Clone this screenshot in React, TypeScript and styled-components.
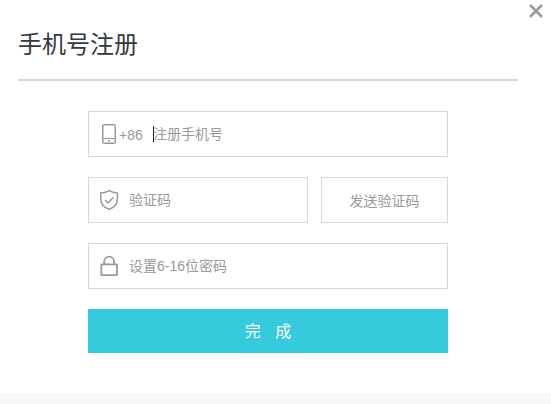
import React from "react";
import styled, { createGlobalStyle } from "styled-components";

const GlobalStyle = createGlobalStyle`
  * { box-sizing: border-box; }
  body {
    margin: 0;
    background: #f8f8f8;
    font-family: "Liberation Sans", "Noto Sans CJK SC", sans-serif;
  }
`;

const Dialog = styled.main`
  position: relative;
  height: 393px;
  background: #fff;
  padding: 0 33px 0 18px;
  overflow: hidden;
`;

const CloseButton = styled.button`
  position: absolute;
  top: 3px;
  right: 7px;
  width: 16px;
  height: 16px;
  padding: 0;
  border: 0;
  background: none;
  svg { display: block; }
`;

const Header = styled.header`
  height: 81px;
  border-bottom: 2px solid #d7d7d7;
`;

const Title = styled.h1`
  margin: 0;
  padding-top: 27px;
  font-size: 24px;
  line-height: 36px;
  font-weight: 400;
  color: #333a3f;
`;

const Form = styled.form`
  display: flex;
  flex-direction: column;
  gap: 20px;
  width: 360px;
  margin: 30px 0 0 70px;
`;

const Row = styled.div`
  display: flex;
  justify-content: space-between;
`;

const Field = styled.label<{ $width: number }>`
  display: flex;
  align-items: center;
  width: ${(p) => p.$width}px;
  height: 46px;
  padding-left: 11px;
  border: 1px solid #d7d7d7;
  font-size: 14px;
  line-height: 20px;
  color: #999;
  svg { flex: none; }
`;

const Prefix = styled.span`
  width: 34px;
  padding-top: 2px;
  font-size: 14px;
`;

const Caret = styled.span`
  width: 1px;
  height: 16px;
  margin-right: -1px;
  background: #222;
`;

const Placeholder = styled.span<{ $gap?: number }>`
  margin-left: ${(p) => p.$gap ?? 0}px;
  white-space: nowrap;
`;

const SendButton = styled.button`
  width: 127px;
  height: 46px;
  padding: 0;
  border: 1px solid #d7d7d7;
  background: #fff;
  font: inherit;
  font-size: 14px;
  color: #999;
`;

const SubmitButton = styled.button`
  height: 44px;
  padding: 0 0 3px;
  border: 0;
  background: #35cadc;
  color: #fff;
  font: inherit;
  font-size: 16px;
  word-spacing: 10px;
`;

const stroke = { fill: "none", stroke: "#999", strokeWidth: 1.5 } as const;

const PhoneIcon = () => (
  <svg width="19" height="22" viewBox="0 0 19 22" {...stroke}>
    <rect x="2.75" y="1.75" width="12.5" height="18.5" rx="1.5" />
    <path d="M3 15.5h12" strokeWidth="1" />
    <rect x="8" y="17" width="2" height="1.5" fill="#999" stroke="none" />
  </svg>
);

const ShieldIcon = () => (
  <svg width="19" height="22" viewBox="0 0 19 22" {...stroke}>
    <path d="M9.1 1.7C6.8 3.2 4 3.9 0.8 4v6.2c0 5 4 8.500 8.300 10.100 4.300-1.600 8.300-5.100 8.300-10.100V4C14.200 3.900 11.400 3.200 9.100 1.700Z" />
    <path d="M5 11l3.100 3 5.300-5.800" />
  </svg>
);

const LockIcon = () => (
  <svg width="19" height="22" viewBox="0 0 19 22" {...stroke} strokeWidth="1.8">
    <rect x="1.300" y="9.400" width="15.700" height="10.800" rx="0.500" />
    <path d="M4.200 9V6.500a4.900 4.900 0 0 1 9.800 0V9" />
  </svg>
);

const CloseIcon = () => (
  <svg width="16" height="16" viewBox="0 0 16 16" fill="none" stroke="#999" strokeWidth="2.6">
    <path d="M2 2l12 12M14 2L2 14" />
  </svg>
);

export default function App() {
  return (
    <>
      <GlobalStyle />
      <Dialog>
        <CloseButton type="button" aria-label="关闭"><CloseIcon /></CloseButton>
        <Header><Title>手机号注册</Title></Header>
        <Form>
          <Field $width={360}>
            <PhoneIcon />
            <Prefix>+86</Prefix>
            <Caret />
            <Placeholder>注册手机号</Placeholder>
          </Field>
          <Row>
            <Field $width={220}>
              <ShieldIcon />
              <Placeholder $gap={10}>验证码</Placeholder>
            </Field>
            <SendButton type="button">发送验证码</SendButton>
          </Row>
          <Field $width={360}>
            <LockIcon />
            <Placeholder $gap={10}>设置6-16位密码</Placeholder>
          </Field>
          <SubmitButton type="button">完 成</SubmitButton>
        </Form>
      </Dialog>
    </>
  );
}
